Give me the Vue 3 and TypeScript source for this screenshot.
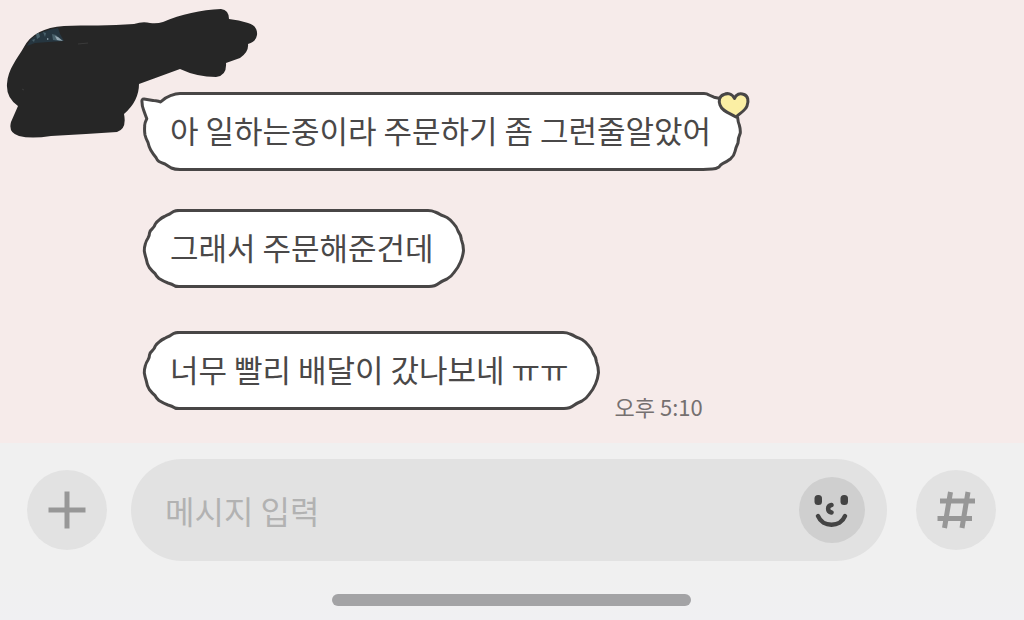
<script setup lang="ts">
import { ref } from 'vue'

interface Message {
  id: number
  text: string
  first?: boolean
  time?: string
}

const messages: Message[] = [
  { id: 1, text: '아 일하는중이라 주문하기 좀 그런줄알았어', first: true },
  { id: 2, text: '그래서 주문해준건데' },
  { id: 3, text: '너무 빨리 배달이 갔나보네 ㅠㅠ', time: '오후 5:10' },
]

const draft = ref('')

const leftTail =
  'M41 1.5C37 1.500 34 2.300 31.300 3.300C28 4.500 25 5.500 20.500 10C18 8.500 16 9 13 8.400L4 7Q1.500 7 2 10Q2 14 3.500 17.700Q5 22 6.800 26.700Q4.300 32 4.700 34Q4.300 39 5 43Q6 47 8 50.500Q9 55 10.700 58Q13 62 16 65.500Q17 68 19 69.500Q22 71 25 72Q28 74 31.300 76Q35 77.500 41 77.500'
const leftRound =
  'M41 1.5C38 1.300 36 1.500 34 2.300Q32 3.500 29.700 5Q27 6 24.500 7.500Q22 8.500 19.700 10.500Q17 12.500 15.300 15Q14.500 17.500 12.500 19.500Q10 21.500 9.500 24Q9.500 26.500 8 29Q6 32 5.300 35Q4.300 38 4.300 42Q5 46 6.300 50Q7 55 9.300 58.500Q12 62 15 64.500Q16.500 67.500 19 69.500Q23 72 28 74Q32 75 35 77Q37 77.800 41 77.500'
const rightTail =
  'M-1 1.5H1Q4 1.500 6 3L11 5.200L17 6.500Q27 12 32 21L34.700 26Q35 30 36.300 33Q37.500 37 37.300 41Q35 46 35 51Q33 55 32 59.500Q31 64 27.700 66.700Q24 69.500 20 71.300Q17.500 72.500 16 75Q13 77 9.300 77L0 77.500H-1'
const rightRound =
  'M-1 1.5H2Q6 1.500 9 3Q12 4 15 6Q18 7 21 8.500Q25 11 27.500 14.500Q31 18 32 22Q35 26 35.500 31Q37.500 36 37.500 41.500Q37 47 34.500 53Q32 59 28 63.500Q25 68 21 70Q16 72 13 74.300Q9 77.500 3 77.500H-1'
</script>

<template>
  <div class="chat">
    <main class="thread">
      <svg class="scribble" width="262" height="142" viewBox="0 0 262 142" aria-hidden="true">
        <path
          fill="#262626"
          d="M64 26C86 25 110 26 134 24Q143 21 150 23Q157 24 163 22C181 14 201 10 221 9Q229 10 229 19Q239 20 248 23Q258 26 257 35Q256 42 248 44Q249 52 240 58L226 63Q227 76 216 77Q197 77 180 69L139 84Q139 101 124 114Q127 129 117 132L86 134L51 136Q31 139 19 136Q8 133 11 122L18 106Q6 98 7 84C8 69 17 59 24 47Q34 28 64 26Z"
        />
        <path fill="#263640" d="M31 39Q42 30 58 28L60 34L64 41L49 42L35 43L27 46Z" />
        <path fill="#49616b" d="M36 34l3-1 1 4-3 2zM43 32l3 1-1 4zM52 34l4 1 5 6-8-1zM32 40l3-1-1 3z" />
        <path fill="#96a9b3" d="M55 36l3 1 5 4-6-1zM47 38l2 1-2 1z" />
        <path stroke="#3a3a3a" stroke-width="1" d="M78 44l10-1M22 89l2 1" />
      </svg>

      <ul class="messages">
        <li v-for="m in messages" :key="m.id" class="row" :class="{ last: m.time }">
          <div class="bubble">
            <svg class="cap start" width="40" height="79" viewBox="0 0 40 79" aria-hidden="true">
              <path :d="m.first ? leftTail : leftRound" />
            </svg>
            <span class="middle"></span>
            <svg class="cap end" width="40" height="79" viewBox="0 0 40 79" aria-hidden="true">
              <path :d="m.first ? rightTail : rightRound" />
            </svg>
            <p class="text">{{ m.text }}</p>
            <svg v-if="m.first" class="heart" width="34" height="30" viewBox="0 0 34 30" aria-hidden="true">
              <path
                d="M17.500 7.500C15 2 10 2 7 3.500C2 5 1.500 10 3 14C5 20 12 22 19 26C23 22 28 20 30 15C32 10 31 5 27 3.500C23 2 19 3 17.500 7.500Z"
              />
            </svg>
          </div>
          <time v-if="m.time" class="time" datetime="17:10">{{ m.time }}</time>
        </li>
      </ul>
    </main>

    <footer class="composer">
      <form class="bar" @submit.prevent>
        <button class="round" type="button" aria-label="추가">
          <svg width="40" height="40" viewBox="0 0 40 40" aria-hidden="true">
            <path d="M20 1.500V38.500M1.500 20H38.500" fill="none" stroke="#979797" stroke-width="5" />
          </svg>
        </button>
        <div class="field">
          <input v-model="draft" class="input" type="text" placeholder="메시지 입력" aria-label="메시지 입력" />
          <button class="emoji" type="button" aria-label="이모티콘">
            <svg width="66" height="66" viewBox="0 0 66 66" aria-hidden="true">
              <rect x="15.500" y="18" width="7.500" height="10" rx="3.500" fill="#444" />
              <rect x="41.500" y="18" width="7.500" height="10" rx="3.500" fill="#444" />
              <path
                d="M32.500 28C28 29 28 34.500 32.500 35.500"
                fill="none"
                stroke="#444"
                stroke-width="4.500"
                stroke-linecap="round"
              />
              <path
                d="M19 39C23.500 50.500 41.500 50.500 46 39"
                fill="none"
                stroke="#444"
                stroke-width="4.500"
                stroke-linecap="round"
              />
            </svg>
          </button>
        </div>
        <button class="round" type="button" aria-label="샵검색">
          <svg width="40" height="40" viewBox="0 0 40 40" aria-hidden="true">
            <path
              d="M14.500 2L8.500 38M32 2L26 38M4 11H39M1.500 28.500H36"
              fill="none"
              stroke="#979797"
              stroke-width="5"
            />
          </svg>
        </button>
      </form>
      <div class="home"></div>
    </footer>
  </div>
</template>

<style>
body {
  margin: 0;
}
</style>

<style scoped>
.chat {
  display: flex;
  flex-direction: column;
  min-height: 100vh;
  background: #f6ebea;
  font-family: 'Noto Sans CJK KR', 'Noto Sans', sans-serif;
  color: #4a4848;
}

.thread {
  position: relative;
  flex: 1;
  padding: 92px 24px 24px 140px;
}

.scribble {
  position: absolute;
  top: 0;
  left: 0;
}

.messages {
  display: flex;
  flex-direction: column;
  gap: 38px;
  margin: 0;
  padding: 0;
  list-style: none;
}

.row {
  display: flex;
  align-items: flex-end;
  gap: 14px;
}

.last {
  padding-top: 5px;
}

.last .bubble {
  margin-bottom: 8px;
}

.bubble {
  position: relative;
  display: grid;
  grid-template-columns: 40px 1fr 40px;
}

.cap {
  display: block;
  grid-row: 1;
  fill: #fff;
  stroke: #484646;
  stroke-width: 3;
  stroke-linejoin: round;
}

.start {
  grid-column: 1;
}

.middle {
  grid-area: 1 / 2;
  border-top: 3px solid #484646;
  border-bottom: 3px solid #484646;
  background: #fff;
}

.end {
  grid-column: 3;
}

.text {
  grid-area: 1 / 1 / 2 / -1;
  align-self: start;
  margin: 0;
  padding: 16px 32px 0 30px;
  font-size: 31px;
  line-height: 44px;
  white-space: nowrap;
}

.heart {
  position: absolute;
  top: -1px;
  right: -8px;
  fill: #fbefa4;
  stroke: #484646;
  stroke-width: 3;
  stroke-linejoin: round;
}

.time {
  font-size: 22px;
  line-height: 24px;
  color: #757070;
}

.composer {
  padding: 16px 28px 14px 27px;
  background: linear-gradient(#f0f0f0 75%, #f0f0f2);
}

.bar {
  display: flex;
  align-items: center;
}

.round,
.emoji {
  display: grid;
  flex: none;
  place-items: center;
  padding: 0;
  border: 0;
  border-radius: 50%;
}

.round {
  width: 80px;
  height: 80px;
  background: #e2e2e2;
}

.field {
  display: flex;
  flex: 1;
  align-items: center;
  min-width: 0;
  margin: 0 29px 0 24px;
  padding: 18px 22px 18px 34px;
  border-radius: 51px;
  background: #e2e2e2;
}

.input {
  flex: 1;
  min-width: 0;
  height: 66px;
  padding: 0;
  border: 0;
  outline: 0;
  background: transparent;
  font: inherit;
  font-size: 32px;
  color: #444;
}

.input::placeholder {
  color: #b2b2b2;
  opacity: 1;
}

.emoji {
  width: 66px;
  height: 66px;
  background: #cfcfcf;
}

.home {
  width: 37%;
  min-width: 120px;
  height: 12px;
  margin: 33px auto 0;
  border-radius: 6px;
  background: #a3a3a5;
}
</style>
